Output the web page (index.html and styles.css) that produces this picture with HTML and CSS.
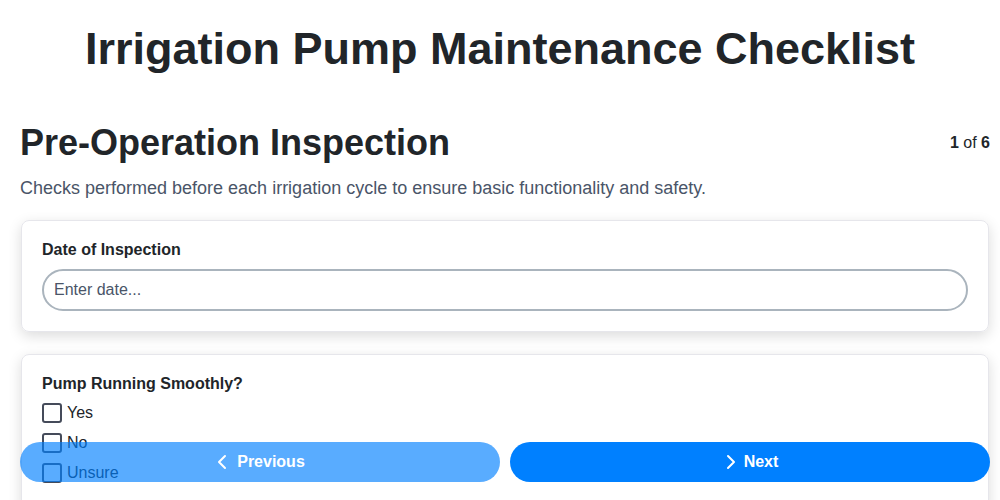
FILE: index.html
```html
<!DOCTYPE html>
<html>

<head>
  <meta charset="utf-8">
  <title>Irrigation Pump Maintenance Checklist</title>
  <link rel="stylesheet" href="styles.css">
</head>

<body>
  <h1 class="page-title">Irrigation Pump Maintenance Checklist</h1>

  <main class="content">
    <div class="section-header">
      <h2 class="section-title">Pre-Operation Inspection</h2>
      <span class="step-count"><b>1</b> of <b>6</b></span>
    </div>

    <p class="section-desc">Checks performed before each irrigation cycle to ensure basic functionality and safety.</p>

    <div class="card">
      <label class="field-label" for="inspectionDate">Date of Inspection</label>
      <input class="text-input" type="text" id="inspectionDate" name="inspectionDate" placeholder="Enter date...">
    </div>

    <div class="card">
      <span class="field-label">Pump Running Smoothly?</span>
      <label class="check-row"><input type="checkbox" name="pumpSmooth" value="yes"> Yes</label>
      <label class="check-row"><input type="checkbox" name="pumpSmooth" value="no"> No</label>
      <label class="check-row"><input type="checkbox" name="pumpSmooth" value="unsure"> Unsure</label>
    </div>
  </main>

  <div class="nav-bar">
    <button class="nav-button nav-prev" disabled>
      <svg width="16" height="16" viewBox="0 0 16 16"><path d="M10 2 L4 8 L10 14" fill="none" stroke="currentColor" stroke-width="2" stroke-linecap="round" stroke-linejoin="round"/></svg>
      Previous
    </button>
    <button class="nav-button nav-next">
      <svg width="16" height="16" viewBox="0 0 16 16"><path d="M6 2 L12 8 L6 14" fill="none" stroke="currentColor" stroke-width="2" stroke-linecap="round" stroke-linejoin="round"/></svg>
      Next
    </button>
  </div>
</body>

</html>
```

FILE: styles.css
```css
html {
  overflow: hidden;
}

body {
  margin: 0;
  padding: 0 0 80px;
  font-family: "Liberation Sans", Arial, sans-serif;
  color: #212529;
  background-color: #ffffff;
}

.page-title {
  font-size: 45px;
  line-height: 1.2;
  text-align: center;
  margin: 22px 20px 45px;
}

.content {
  display: block;
  padding: 0 10px 0 20px;
}

.section-header {
  display: flex;
  justify-content: space-between;
  align-items: center;
}

.section-title {
  font-size: 36px;
  line-height: 1.2;
  margin: 0;
}

.step-count {
  font-size: 16px;
}

.section-desc {
  font-size: 18px;
  color: #4a5568;
  margin: 14px 0 21px;
}

.card {
  display: flex;
  flex-direction: column;
  align-items: flex-start;
  padding: 20px;
  border: 1px solid #e6e6eb;
  border-radius: 8px;
  box-shadow: 0 4px 14px rgba(0, 0, 0, 0.14);
  margin: 0 1px 22px;
}

.field-label {
  font-size: 16px;
  font-weight: bold;
  margin-bottom: 10px;
}

.text-input {
  box-sizing: border-box;
  width: 100%;
  height: 42px;
  padding: 0 10px;
  font-family: inherit;
  font-size: 16px;
  border: 2px solid #aab4bd;
  border-radius: 21px;
  outline: none;
}

.text-input::placeholder {
  color: #4a5568;
}

.check-row {
  display: flex;
  align-items: center;
  gap: 5px;
  height: 20px;
  margin-bottom: 10px;
  font-size: 16px;
}

.check-row input {
  appearance: none;
  width: 20px;
  height: 20px;
  margin: 0;
  border: 2px solid #454b5a;
  border-radius: 3px;
  cursor: pointer;
}

.nav-bar {
  position: fixed;
  left: 20px;
  right: 10px;
  bottom: 18px;
  display: flex;
  gap: 10px;
}

.nav-button {
  flex: 1;
  height: 40px;
  display: flex;
  justify-content: center;
  align-items: center;
  gap: 6px;
  border: none;
  border-radius: 20px;
  background-color: #0080ff;
  color: white;
  font-family: inherit;
  font-size: 16px;
  font-weight: bold;
  cursor: pointer;
}

.nav-prev:disabled {
  opacity: 0.65;
  cursor: default;
}
```
